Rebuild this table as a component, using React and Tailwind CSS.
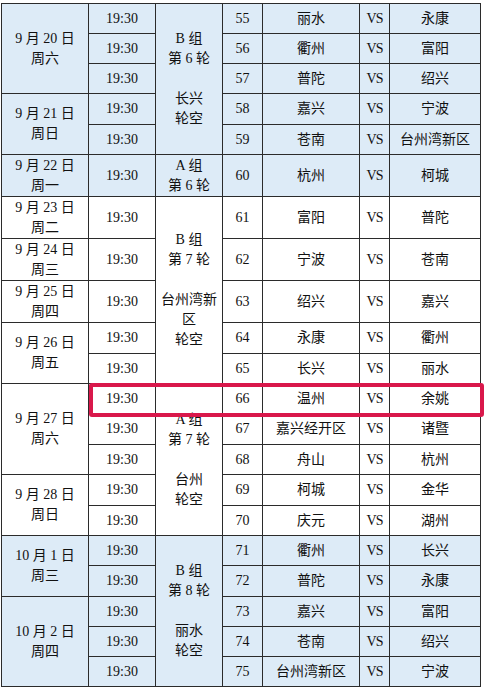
const days = [
  { date: "9 月 20 日", week: "周六", h: [30, 30, 30] },
  { date: "9 月 21 日", week: "周日", h: [31, 30] },
  { date: "9 月 22 日", week: "周一", h: [42] },
  { date: "9 月 23 日", week: "周二", h: [42] },
  { date: "9 月 24 日", week: "周三", h: [42] },
  { date: "9 月 25 日", week: "周四", h: [42] },
  { date: "9 月 26 日", week: "周五", h: [31, 30] },
  { date: "9 月 27 日", week: "周六", h: [30, 31, 30] },
  { date: "9 月 28 日", week: "周日", h: [31, 30] },
  { date: "10 月 1 日", week: "周三", h: [30, 31] },
  { date: "10 月 2 日", week: "周四", h: [30, 30, 30] },
];

const games = [
  ["丽水", "永康"],
  ["衢州", "富阳"],
  ["普陀", "绍兴"],
  ["嘉兴", "宁波"],
  ["苍南", "台州湾新区"],
  ["杭州", "柯城"],
  ["富阳", "普陀"],
  ["宁波", "苍南"],
  ["绍兴", "嘉兴"],
  ["永康", "衢州"],
  ["长兴", "丽水"],
  ["温州", "余姚"],
  ["嘉兴经开区", "诸暨"],
  ["舟山", "杭州"],
  ["柯城", "金华"],
  ["庆元", "湖州"],
  ["衢州", "长兴"],
  ["普陀", "永康"],
  ["嘉兴", "富阳"],
  ["苍南", "绍兴"],
  ["台州湾新区", "宁波"],
];

// group cell starts at game index -> { span, lines }
const rounds = {
  0: { span: 5, lines: ["B 组", "第 6 轮", "", "长兴", "轮空"] },
  5: { span: 1, lines: ["A 组", "第 6 轮"] },
  6: { span: 5, lines: ["B 组", "第 7 轮", "", "台州湾新", "区", "轮空"] },
  11: { span: 5, lines: ["A 组", "第 7 轮", "", "台州", "轮空"] },
  16: { span: 5, lines: ["B 组", "第 8 轮", "", "丽水", "轮空"] },
};

const cell = "border border-[#2b2b2b] p-0 text-center align-middle";

function buildRows() {
  const rows = [];
  let n = 0;
  days.forEach((d) => {
    d.h.forEach((h, j) => {
      const i = n;
      const blue = i <= 5 || i >= 16;
      const r = rounds[i];
      rows.push(
        <tr
          key={i}
          style={{ height: h }}
          className={blue ? "bg-[#ddebf7]" : "bg-white"}
        >
          {j === 0 && (
            <td rowSpan={d.h.length} className={cell}>
              <div>{d.date}</div>
              <div>{d.week}</div>
            </td>
          )}
          <td className={cell}>19:30</td>
          {r && (
            <td rowSpan={r.span} className={cell}>
              {r.lines.map((l, k) => (
                <div key={k} className="h-5">
                  {l}
                </div>
              ))}
            </td>
          )}
          <td className={cell}>{55 + i}</td>
          <td className={cell}>{games[i][0]}</td>
          <td className={`${cell} tracking-[-1px]`}>VS</td>
          <td className={cell}>{games[i][1]}</td>
        </tr>
      );
      n++;
    });
  });
  return rows;
}

export default function App() {
  return (
    <div className="w-[485px] h-[690px] bg-white pt-[3px] pl-px font-['Liberation_Serif','Noto_Sans_CJK_SC',serif] text-[14px] leading-5 text-[#111]">
      <div className="relative w-[479px]">
        <table className="w-[479px] table-fixed border-collapse">
          <colgroup>
            <col className="w-[87px]" />
            <col className="w-[67px]" />
            <col className="w-[67px]" />
            <col className="w-[40px]" />
            <col className="w-[97px]" />
            <col className="w-[30px]" />
            <col className="w-[91px]" />
          </colgroup>
          <tbody>{buildRows()}</tbody>
        </table>
        <div className="absolute left-[88px] top-[380px] w-[395px] h-[34px] border-4 border-[#d9184b] rounded-[3px]" />
      </div>
    </div>
  );
}
